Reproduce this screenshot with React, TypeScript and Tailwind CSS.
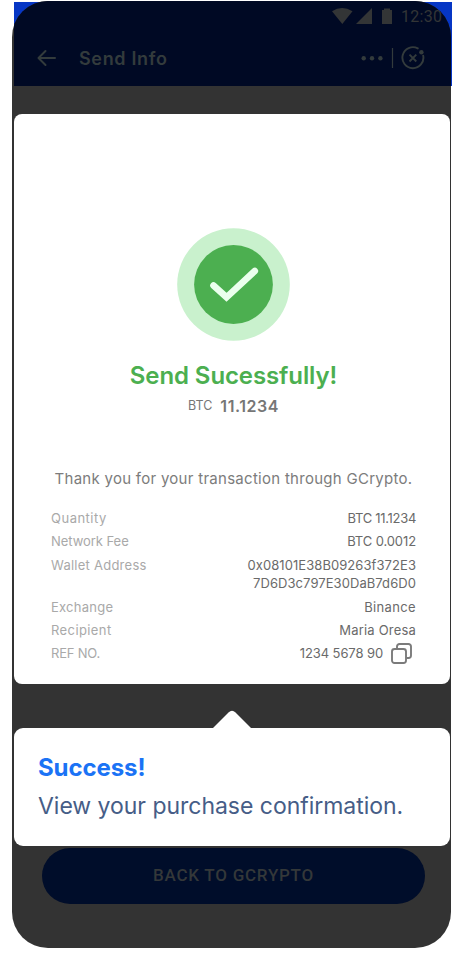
import type { ReactNode } from "react";

function StatusBar() {
  return (
    <div className="flex h-[29px] items-center justify-end pr-[8px] text-[#333536]">
      <svg width="64" height="18" viewBox="0 0 64 18" fill="currentColor" className="mt-px">
        <path d="M1 4.3Q11 -2.1 21.5 4.3L11.3 17Z" />
        <path d="M41 1V17H25Z" />
        <path d="M53 1.5H59V3H61V17H51V3H53Z" />
      </svg>
      <span className="ml-[6px] mt-[2px] w-[42px] whitespace-nowrap font-['Roboto',sans-serif] text-[16px] leading-[18px] tracking-[0.3px]">12:30</span>
    </div>
  );
}

function Header() {
  return (
    <header className="ml-[2px] h-[85px] w-[437px] bg-[#000924]">
      <StatusBar />
      <div className="flex h-[56px] items-center pl-[23px] text-[#333b3c]">
        <svg width="20" height="18" viewBox="0 0 20 18" fill="none" stroke="currentColor" strokeWidth="2" strokeLinecap="round" strokeLinejoin="round">
          <path d="M18 9H1.5M8.5 2 1.5 9l7 7" />
        </svg>
        <h1 className="ml-[22px] mt-[2px] whitespace-nowrap font-['Inter',sans-serif] text-[18px] font-semibold leading-6 tracking-[0.65px]">Send Info</h1>
        <svg className="ml-auto mr-[25px]" width="66" height="26" viewBox="0 0 66 26" fill="none" stroke="currentColor">
          <g fill="currentColor" stroke="none">
            <circle cx="3.7" cy="13.2" r="2.2" />
            <circle cx="12" cy="13.2" r="2.2" />
            <circle cx="20.4" cy="13.2" r="2.2" />
            <circle cx="61.4" cy="7.2" r="2.2" />
          </g>
          <path d="M32.5 3V23" strokeWidth="1.2" />
          <path d="M57.8 3.4A10.5 10.5 0 1 0 63.2 10.6" strokeWidth="1.9" strokeLinecap="round" />
          <path d="m49.5 9.7 6.8 6.8m0-6.8-6.8 6.8" strokeWidth="1.9" />
        </svg>
      </div>
    </header>
  );
}

function Row({ label, className, valueClass, children }: { label: string; className: string; valueClass: string; children: ReactNode }) {
  return (
    <div className="flex justify-between">
      <dt className={`whitespace-nowrap text-[#a9a9a9] ${className}`}>{label}</dt>
      <dd className={`whitespace-nowrap text-right text-[#6a6a6a] ${valueClass}`}>{children}</dd>
    </div>
  );
}

function Receipt() {
  return (
    <section className="ml-[2px] mt-[28px] flex h-[570px] w-[436px] flex-col items-center rounded-[8px] bg-white pl-[3px] pt-[114px]">
      <svg width="114" height="114" viewBox="0 0 114 114" fill="none" className="shrink-0">
        <circle cx="56.5" cy="56.5" r="56.3" fill="#c9f1cd" />
        <circle cx="56.5" cy="56.5" r="39.4" fill="#4caf50" />
        <path d="m36.5 57.5 13 11.8L77.8 43" stroke="#ebffed" strokeWidth="6.6" strokeLinecap="round" strokeLinejoin="miter" />
      </svg>
      <h2 className="mt-[18px] whitespace-nowrap font-['Inter',sans-serif] text-[24px] font-semibold leading-8 tracking-[-0.1px] text-[#4caf50]">Send Sucessfully!</h2>
      <p className="mt-[3px] flex h-[22px] items-center gap-[8px] whitespace-nowrap font-['Inter',sans-serif] text-[#767676]">
        <span className="text-[12.5px]">BTC</span>
        <strong className="text-[16px] font-semibold tracking-[0.55px]">11.1234</strong>
      </p>
      <p className="mt-[50px] whitespace-nowrap font-['Inter',sans-serif] text-[15px] leading-6 tracking-[0.28px] text-[#7c7c7c]">Thank you for your transaction through GCrypto.</p>
      <dl className="mt-[18px] flex w-[365px] flex-col gap-[5px] font-['Inter',sans-serif] text-[13px] leading-[18.4px]">
        <Row label="Quantity" className="tracking-[0.5px]" valueClass="tracking-[-0.3px]">BTC 11.1234</Row>
        <Row label="Network Fee" className="tracking-[-0.05px]" valueClass="tracking-[-0.1px]">BTC 0.0012</Row>
        <Row label="Wallet Address" className="tracking-[0.25px]" valueClass="tracking-[0.07px]">0x08101E38B09263f372E3<br />7D6D3c797E30DaB7d6D0</Row>
        <Row label="Exchange" className="tracking-[0.25px]" valueClass="tracking-[0.35px]">Binance</Row>
        <Row label="Recipient" className="tracking-[0.4px]" valueClass="tracking-[0.2px]">Maria Oresa</Row>
        <Row label="REF NO." className="tracking-[-0.2px]" valueClass="flex h-[18.4px] items-center gap-[8px] pr-[4px] tracking-[-0.1px]">
          <span>1234 5678 90</span>
          <svg width="21" height="21" viewBox="0 0 21 21" fill="none" stroke="#7b7b7b" strokeWidth="1.9">
            <rect x="1" y="6" width="14" height="14" rx="2.5" />
            <path d="M6 5.5V3.5A2.5 2.5 0 0 1 8.5 1H17.5A2.5 2.5 0 0 1 20 3.5V12.5A2.5 2.5 0 0 1 17.5 15H15.5" />
          </svg>
        </Row>
      </dl>
    </section>
  );
}

function Tooltip() {
  return (
    <section className="ml-[2px] mt-[26px] w-[436px]">
      <svg className="mx-auto block" width="40" height="18" viewBox="0 0 40 18" fill="#fff">
        <path d="M1 18 16.5 2.4Q20 -.8 23.5 2.4L39 18Z" />
      </svg>
      <div className="h-[118px] rounded-[9px] bg-white pl-[24px] pt-[24px] font-['Inter',sans-serif]">
        <h2 className="w-fit whitespace-nowrap text-[24px] font-bold leading-8 tracking-[-0.1px] text-[#1b73f5]">Success!</h2>
        <p className="mt-[6px] w-fit whitespace-nowrap text-[23px] leading-8 tracking-[-0.03px] text-[#465d87]">View your purchase confirmation.</p>
      </div>
    </section>
  );
}

export default function App() {
  return (
    <main className="h-[953px] w-[464px] overflow-hidden bg-white pt-px">
      <div className="ml-[12px] w-[440px] bg-[linear-gradient(#0636c5,#0636c5)] bg-[length:438px_84px] bg-[position:2px_1px] bg-no-repeat">
        <div className="h-[947px] w-[439px] overflow-hidden rounded-[36px] bg-[#333333]">
          <Header />
          <Receipt />
          <Tooltip />
          <button className="ml-[30px] mt-[2px] block h-[56px] w-[383px] whitespace-nowrap rounded-full bg-[#000d2a] font-['Roboto',sans-serif] text-[17px] font-medium tracking-[0.75px] text-[#343839]">BACK TO GCRYPTO</button>
        </div>
      </div>
    </main>
  );
}
